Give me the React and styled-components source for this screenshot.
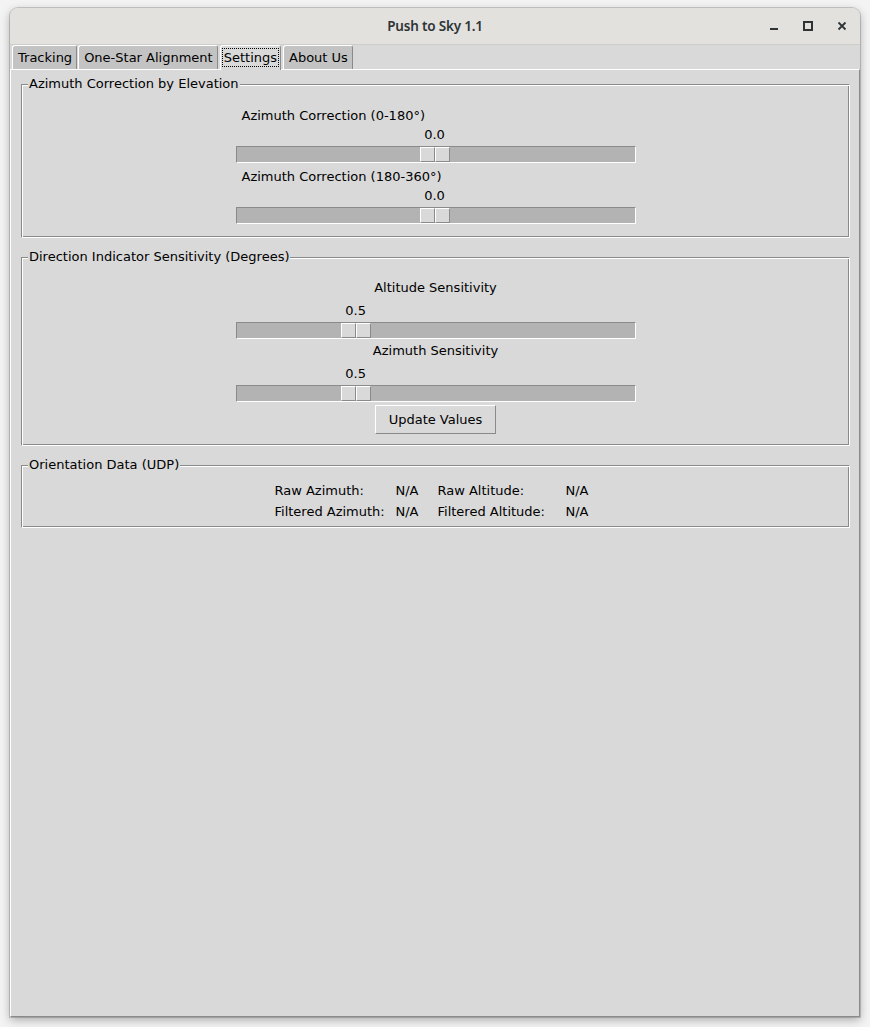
import React from 'react';
import styled, { createGlobalStyle } from 'styled-components';

const Global = createGlobalStyle`
  html, body { margin: 0; padding: 0; background: #f3f3f3; }
  body { font-family: "DejaVu Sans", "Liberation Sans", sans-serif; }
  #root { padding: 8px 10px 10px 10px; }
`;

const Window = styled.div`
  width: 850px;
  height: 1009px;
  display: flex;
  flex-direction: column;
  border-radius: 8px 8px 0 0;
  overflow: hidden;
  background: #d9d9d9;
  box-shadow: 0 0 0 1px rgba(0, 0, 0, 0.16), 0 3px 10px rgba(0, 0, 0, 0.3);
`;

const TitleBar = styled.div`
  height: 36px;
  flex: none;
  display: grid;
  grid-template-columns: 1fr auto 1fr;
  align-items: center;
  background: #e3e1de;
  border-bottom: 1px solid #cfcdca;
`;

const Title = styled.div`
  grid-column: 2;
  font-family: "Noto Sans", "Open Sans", sans-serif;
  font-weight: 600;
  font-size: 13.5px;
  color: #2e3436;
  letter-spacing: -0.2px;
`;

const Controls = styled.div`
  grid-column: 3;
  justify-self: end;
  display: flex;
  padding-right: 1px;
`;

const Control = styled.div`
  width: 34px;
  height: 36px;
  display: flex;
  align-items: center;
  justify-content: center;
  color: #2e3436;
`;

const TabRow = styled.div`
  height: 24px;
  flex: none;
  display: flex;
  align-items: flex-end;
  gap: 1px;
  padding-left: 2px;
`;

const Tab = styled.div`
  box-sizing: border-box;
  padding: ${p => (p.$active ? '0 2px 1px 2px' : '0 4px 0 5px')};
  margin: 0 ${p => (p.$active ? 1 : 0)}px ${p => (p.$active ? -1 : 0)}px;
  height: ${p => (p.$active ? 25 : 24)}px;
  border: 1px solid;
  border-bottom: none;
  border-color: #fff #8a8a8a transparent #fff;
  border-radius: 3px 3px 0 0;
  background: ${p => (p.$active ? '#d9d9d9' : '#c3c3c3')};
  font-size: 13px;
  line-height: 22px;
  color: #000;
  display: flex;
  align-items: center;
  position: relative;
  z-index: ${p => (p.$active ? 1 : 0)};
`;

const Focus = styled.span`
  outline: 1px dotted #000;
  outline-offset: 0;
  line-height: 17px;
  padding: 0 1px;
`;

const Pane = styled.div`
  flex: 1;
  border-top: 1px solid #fff;
  border-left: 1px solid #fff;
  border-right: 1px solid #8a8a8a;
  border-bottom: 1px solid #8a8a8a;
  padding-top: 6px;
`;

const Group = styled.fieldset`
  margin: ${p => p.$mt}px 9px 0 10px;
  padding: ${p => p.$pt}px 0 ${p => p.$pb}px;
  border: 1px solid;
  border-color: #8a8a8a #fff #fff #8a8a8a;
  box-shadow: inset 1px 1px 0 #fff, inset -1px -1px 0 #8a8a8a;
  min-width: 0;
`;

const Legend = styled.legend`
  margin-left: 6px;
  padding: 0 1px;
  font-size: 13px;
  line-height: 16px;
  color: #000;
  background: #d9d9d9;
`;

const ScaleBox = styled.div`
  width: 400px;
  margin: 0 auto ${p => p.$mb || 0}px;
  display: flex;
  flex-direction: column;
`;

const ScaleLabel = styled.div`
  padding-left: 6px;
  font-size: 13px;
  line-height: 16px;
  height: 16px;
  color: #000;
`;

const ValueRow = styled.div`
  position: relative;
  height: 16px;
  margin-top: ${p => p.$mt}px;
`;

const ValueText = styled.span`
  position: absolute;
  top: 0;
  transform: translateX(-50%);
  font-size: 13px;
  line-height: 16px;
  color: #000;
`;

const Trough = styled.div`
  position: relative;
  box-sizing: border-box;
  height: 17px;
  margin-top: 3px;
  background: #b3b3b3;
  border: 1px solid;
  border-color: #8a8a8a #fff #fff #8a8a8a;
`;

const Thumb = styled.div`
  position: absolute;
  top: 0;
  width: 30px;
  height: 15px;
  display: flex;
`;

const ThumbHalf = styled.div`
  box-sizing: border-box;
  width: 15px;
  height: 15px;
  background: #d9d9d9;
  border: 1px solid;
  border-color: #fff #8a8a8a #8a8a8a #fff;
`;

const CenterLabel = styled.div`
  text-align: center;
  font-size: 13px;
  line-height: 16px;
  color: #000;
  margin-top: ${p => p.$mt || 0}px;
`;

const ButtonRow = styled.div`
  display: flex;
  justify-content: center;
  margin-top: 3px;
`;

const Button = styled.button`
  box-sizing: border-box;
  width: 121px;
  height: 29px;
  background: #d9d9d9;
  border: 1px solid;
  border-color: #fff #8a8a8a #8a8a8a #fff;
  border-radius: 0;
  font-family: "DejaVu Sans", sans-serif;
  font-size: 13px;
  color: #000;
  padding: 0;
`;

const DataGrid = styled.div`
  display: grid;
  grid-template-columns: 121px 42px 128px 31px;
  justify-content: center;
  font-size: 13px;
  line-height: 21px;
  color: #000;
`;

function Scale({ label, value, min, max, fixed = 1, valueGap, mb }) {
  const f = (value - min) / (max - min);
  const center = 15 + f * (398 - 30);
  return (
    <ScaleBox $mb={mb}>
      {label && <ScaleLabel>{label}</ScaleLabel>}
      <ValueRow $mt={valueGap}>
        <ValueText style={{ left: center }}>{value.toFixed(fixed)}</ValueText>
      </ValueRow>
      <Trough>
        <Thumb style={{ left: center - 16 }}>
          <ThumbHalf />
          <ThumbHalf />
        </Thumb>
      </Trough>
    </ScaleBox>
  );
}

const tabs = ['Tracking', 'One-Star Alignment', 'Settings', 'About Us'];

export default function App() {
  return (
    <>
      <Global />
      <Window>
        <TitleBar>
          <Title>Push to Sky 1.1</Title>
          <Controls>
            <Control>
              <svg width="10" height="10" viewBox="0 0 10 10">
                <rect x="1" y="7" width="8" height="2" fill="currentColor" />
              </svg>
            </Control>
            <Control>
              <svg width="10" height="10" viewBox="0 0 10 10">
                <rect x="1" y="1" width="8" height="8" fill="none" stroke="currentColor" strokeWidth="2" />
              </svg>
            </Control>
            <Control>
              <svg width="10" height="10" viewBox="0 0 10 10">
                <path d="M1.5 1.5 L8.5 8.5 M8.5 1.5 L1.5 8.5" stroke="currentColor" strokeWidth="1.8" />
              </svg>
            </Control>
          </Controls>
        </TitleBar>
        <TabRow>
          {tabs.map(t => (
            <Tab key={t} $active={t === 'Settings'}>
              {t === 'Settings' ? <Focus>{t}</Focus> : t}
            </Tab>
          ))}
        </TabRow>
        <Pane>
          <Group $mt={0} $pt={16} $pb={13}>
            <Legend>Azimuth Correction by Elevation</Legend>
            <Scale label="Azimuth Correction (0-180°)" value={0} min={-10} max={10} valueGap={3} mb={6} />
            <Scale label="Azimuth Correction (180-360°)" value={0} min={-10} max={10} valueGap={3} />
          </Group>
          <Group $mt={11} $pt={15} $pb={11}>
            <Legend>Direction Indicator Sensitivity (Degrees)</Legend>
            <CenterLabel>Altitude Sensitivity</CenterLabel>
            <Scale value={0.5} min={0.1} max={1.5} valueGap={7} />
            <CenterLabel $mt={4}>Azimuth Sensitivity</CenterLabel>
            <Scale value={0.5} min={0.1} max={1.5} valueGap={7} />
            <ButtonRow>
              <Button>Update Values</Button>
            </ButtonRow>
          </Group>
          <Group $mt={11} $pt={7} $pb={5}>
            <Legend>Orientation Data (UDP)</Legend>
            <DataGrid>
              <span>Raw Azimuth:</span>
              <span>N/A</span>
              <span>Raw Altitude:</span>
              <span>N/A</span>
              <span>Filtered Azimuth:</span>
              <span>N/A</span>
              <span>Filtered Altitude:</span>
              <span>N/A</span>
            </DataGrid>
          </Group>
        </Pane>
      </Window>
    </>
  );
}
